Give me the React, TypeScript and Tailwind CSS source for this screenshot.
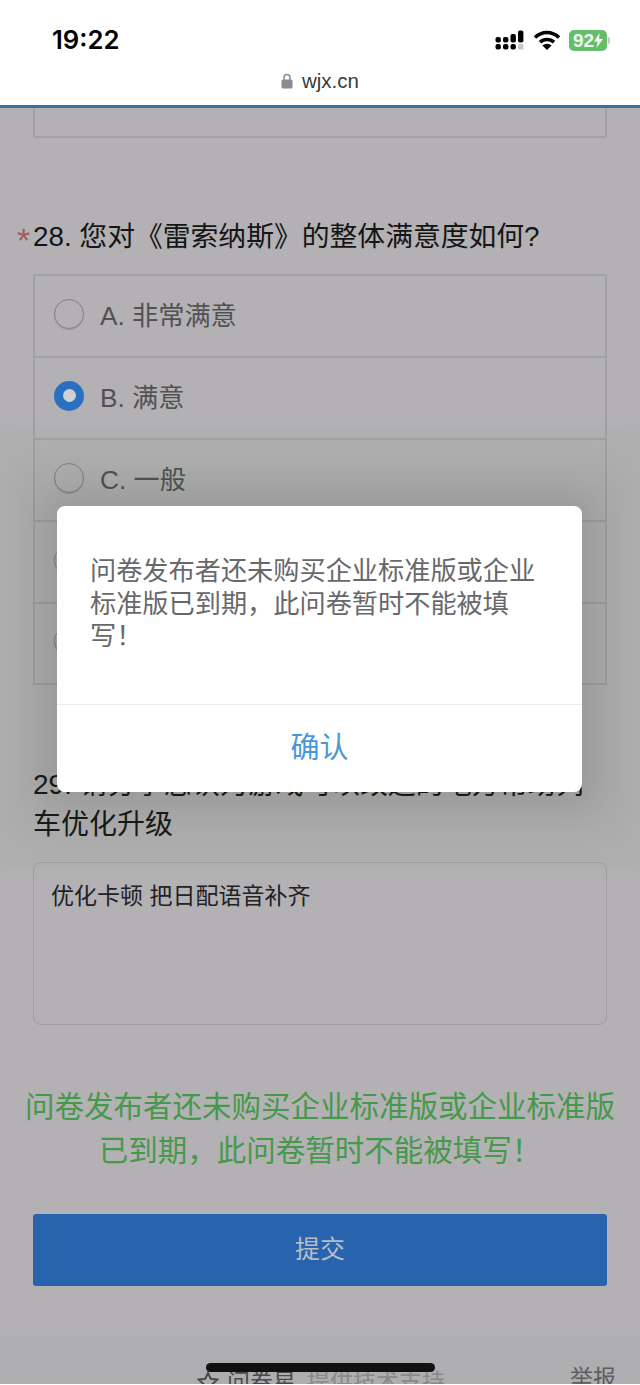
const cjk = "font-['Liberation_Sans','Noto_Sans_CJK_SC',sans-serif]";

function Radio({ checked }: { checked?: boolean }) {
  if (checked) {
    return (
      <span className="flex h-[30px] w-[30px] shrink-0 items-center justify-center rounded-full bg-[#2a70c2]">
        <span className="h-[13px] w-[13px] rounded-full bg-[#d0d0d2]" />
      </span>
    );
  }
  return <span className="h-[30px] w-[30px] shrink-0 rounded-full border-[1.5px] border-[#807f82] shadow-[0_1px_1px_rgba(0,0,0,0.15)]" />;
}

function Option({ label, checked, last }: { label: string; checked?: boolean; last?: boolean }) {
  return (
    <div className={`flex items-center gap-[16px] pl-[19px] pb-[5px] ${last ? "h-[79px]" : "h-[82px] border-b-2 border-[#a2a1a3]"}`}>
      <Radio checked={checked} />
      <span className="mt-[4px] text-[26.200px] leading-[34px] text-[#525154]">{label}</span>
    </div>
  );
}

export default function App() {
  return (
    <div className={`relative h-[1385px] w-[640px] overflow-hidden bg-white ${cjk}`}>
      <header className="relative z-20 h-[108px] border-b-[3px] border-[#39709f] bg-white">
        <div className="flex h-[73px] items-center justify-between pl-[52px] pr-[30px] pt-[7px]">
          <span className="font-['Inter',sans-serif] text-[25.700px] font-semibold text-black">19:22</span>
          <div className="flex items-center gap-[8px]">
            <svg width="30" height="20" viewBox="0 0 30 20">
              <g fill="#000">
                <rect x="0.500" y="7" width="5.400" height="5.400" rx="2" />
                <rect x="0.500" y="14" width="5.400" height="5.400" rx="2" />
                <rect x="8" y="7" width="5.400" height="5.400" rx="2" />
                <rect x="8" y="14" width="5.400" height="5.400" rx="2" />
                <rect x="15.500" y="4" width="5.400" height="8.400" rx="2" />
                <rect x="15.500" y="14" width="5.400" height="5.400" rx="2" />
                <rect x="23" y="0.500" width="5.400" height="12" rx="2" />
              </g>
              <rect x="23" y="14" width="5.400" height="5.400" rx="1" fill="#c9c9c9" />
            </svg>
            <svg width="28" height="22" viewBox="0 0 28 22" fill="none" stroke="#000" strokeWidth="3.600">
              <path d="M2 8.500C9 1.800 19 1.800 26 8.500" />
              <path d="M7 13.200C11 9.600 17 9.600 21 13.200" />
              <path d="M14 21l-4.600-4.400a6.600 6.600 0 0 1 9.200 0z" fill="#000" stroke="none" />
            </svg>
            <div className="flex items-center">
              <span className="flex h-[21px] w-[38px] items-center justify-center rounded-[5px] bg-[#66bd6b] text-[19px] font-bold leading-none text-[#eef7ee]">
                92
                <svg width="9" height="15" viewBox="0 0 9 15" fill="#eef7ee"><path d="M5.500 0 0 8.500h3.500L2.500 15 9 6H5.200z" /></svg>
              </span>
              <span className="ml-[1px] h-[7px] w-[2px] rounded-r bg-[#c4c4c4]" />
            </div>
          </div>
        </div>
        <div className="flex h-[16px] items-center justify-center gap-[9px] text-[#3a3a3c]">
          <svg width="12" height="16" viewBox="0 0 12 16" fill="#8c8c8e">
            <path d="M3 7V4.500a3 3 0 0 1 6 0V7" fill="none" stroke="#8c8c8e" strokeWidth="1.500" />
            <rect x="0.500" y="6.500" width="11" height="9" rx="1.500" />
          </svg>
          <span className="text-[20.500px] leading-none">wjx.cn</span>
        </div>
      </header>

      <main className="relative bg-[#b3b1b4]">
        <div className="mx-[33px] h-[30px] border-x-2 border-b-2 border-[#a2a1a3]" />

        <section className="relative mt-[80px] pl-[33px]">
          <span className="absolute left-[17px] top-[4px] text-[34px] leading-[36px] text-[#a75a5c]">*</span>
          <h2 className="text-[27.800px] leading-[38px] text-[#151515]">28. 您对《雷索纳斯》的整体满意度如何?</h2>
        </section>

        <div className="mx-[33px] mt-[18px] border-2 border-[#a2a1a3]">
          <Option label="A. 非常满意" />
          <Option label="B. 满意" checked />
          <Option label="C. 一般" />
          <Option label="D. 不满意" />
          <Option label="E. 非常不满意" last />
        </div>

        <section className="mt-[80px] px-[33px]">
          <h2 className="text-[28px] leading-[40px] text-[#151515]">29. 请分享您认为游戏可以改进的地方帮助列车优化升级</h2>
          <div className="mt-[17px] h-[163px] rounded-[8px] border-[1.5px] border-[#9f9ea1] px-[17px] pt-[18px] text-[23px] leading-[30px] text-[#222123]">
            优化卡顿 把日配语音补齐
          </div>
        </section>

        <p className="mt-[60px] px-[20px] text-center text-[29.500px] leading-[44px] text-[#46994b]">
          问卷发布者还未购买企业标准版或企业标准版已到期，此问卷暂时不能被填写！
        </p>

        <button className="mx-[33px] mt-[41px] flex h-[72px] w-[574px] items-center justify-center rounded-[3px] bg-[#2863ae] text-[25px] text-[#b8bdc6]">
          提交
        </button>

        <footer className="mt-[50px] flex h-[48px] items-start justify-between overflow-hidden bg-[#aeadaf] pl-[197px] pr-[24px] pt-[25px] text-[23px] leading-[34px]">
          <span className="mt-[4px] flex items-center gap-[8px]">
            <svg width="22" height="22" viewBox="0 0 22 22" fill="none" stroke="#4a494c" strokeWidth="2"><path d="M11 1.800l2.800 6 6.400.8-4.700 4.400 1.200 6.400L11 16.200l-5.700 3.200 1.200-6.400L1.800 8.600l6.400-.8z" /></svg>
            <span className="text-[#4a494c]">问卷星</span>
            <span className="ml-[3px] text-[#8a898c]">提供技术支持</span>
          </span>
          <span className="text-[#5d5c5f]">举报</span>
        </footer>
      </main>

      <div className="absolute left-[57px] top-[506px] z-10 flex h-[286px] w-[525px] flex-col rounded-[8px] bg-white shadow-[0_0_30px_12px_rgba(0,0,0,0.08),0_0_34px_40px_rgba(20,30,15,0.04),0_0_18px_74px_rgba(90,130,70,0.06)]">
        <p className="h-[198px] px-[33px] pt-[49px] text-[26.200px] leading-[32.500px] text-[#68686b]">
          问卷发布者还未购买企业标准版或企业标准版已到期，此问卷暂时不能被填写！
        </p>
        <div className="flex flex-1 items-center justify-center border-t border-[#ececec] text-[29px] text-[#4a96dc]">确认</div>
      </div>

      <div className="absolute bottom-[13px] left-[206px] z-20 h-[9px] w-[229px] rounded-full bg-[#111112]" />
    </div>
  );
}
